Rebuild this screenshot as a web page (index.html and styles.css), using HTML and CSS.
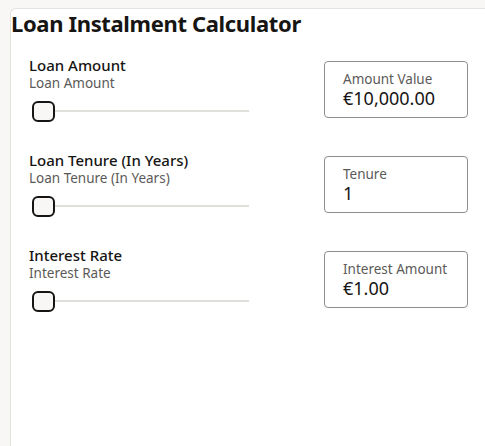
FILE: index.html
```html
<!DOCTYPE html>
<html lang="en">
<head>
<meta charset="utf-8">
<title>Loan Instalment Calculator</title>
<link rel="stylesheet" href="styles.css">
</head>
<body>
<div class="card">
  <h1 class="title">Loan Instalment Calculator</h1>
  <div class="rows">
    <div class="row">
      <div class="field">
        <div class="label">Loan Amount</div>
        <div class="sublabel">Loan Amount</div>
        <div class="slider"><span class="thumb"></span><span class="track"></span></div>
      </div>
      <div class="box">
        <div class="box-label">Amount Value</div>
        <div class="box-value">€10,000.00</div>
      </div>
    </div>
    <div class="row">
      <div class="field">
        <div class="label">Loan Tenure (In Years)</div>
        <div class="sublabel">Loan Tenure (In Years)</div>
        <div class="slider"><span class="thumb"></span><span class="track"></span></div>
      </div>
      <div class="box">
        <div class="box-label">Tenure</div>
        <div class="box-value">1</div>
      </div>
    </div>
    <div class="row">
      <div class="field">
        <div class="label">Interest Rate</div>
        <div class="sublabel">Interest Rate</div>
        <div class="slider"><span class="thumb"></span><span class="track"></span></div>
      </div>
      <div class="box">
        <div class="box-label">Interest Amount</div>
        <div class="box-value">€1.00</div>
      </div>
    </div>
  </div>
</div>
</body>
</html>
```
FILE: styles.css
```css
html, body {
  margin: 0;
  padding: 0;
}
body {
  background: #f8f7f5;
  font-family: "Noto Sans", Lato, sans-serif;
  color: #161513;
  padding: 8px 0 0 10px;
  height: 446px;
  box-sizing: border-box;
  overflow: hidden;
}
.card {
  background: #ffffff;
  border: 1px solid #e4e2df;
  border-right: none;
  border-radius: 6px 0 0 0;
  height: 460px;
  box-sizing: border-box;
}
.title {
  margin: 0;
  font-size: 22px;
  font-weight: 700;
  line-height: 28px;
  color: #161513;
  letter-spacing: -0.35px;
}
.rows {
  padding: 19px 0 0 18px;
  display: flex;
  flex-direction: column;
}
.row {
  display: grid;
  grid-template-columns: 220px 144px;
  column-gap: 75px;
  align-items: start;
  height: 95px;
}
.label {
  font-size: 15px;
  font-weight: 500;
  line-height: 18px;
}
.sublabel {
  margin-top: 1px;
  font-size: 13.5px;
  line-height: 16px;
  color: #5c5a58;
}
.slider {
  margin-top: 9px;
  display: flex;
  align-items: center;
  padding-left: 3px;
  height: 22px;
}
.thumb {
  width: 19px;
  height: 17px;
  border: 2px solid #161513;
  border-radius: 6px;
  background: #f8f7f5;
  flex: none;
}
.track {
  flex: 1;
  height: 2px;
  background: #e1dfdc;
}
.box {
  margin-top: 5px;
  height: 57px;
  box-sizing: border-box;
  border: 1px solid #8f8d8a;
  border-radius: 4px;
  padding: 8px 0 0 18px;
}
.box-label {
  font-size: 13.5px;
  line-height: 18px;
  color: #5c5a58;
}
.box-value {
  font-size: 18px;
  line-height: 20px;
  color: #161513;
}
```
